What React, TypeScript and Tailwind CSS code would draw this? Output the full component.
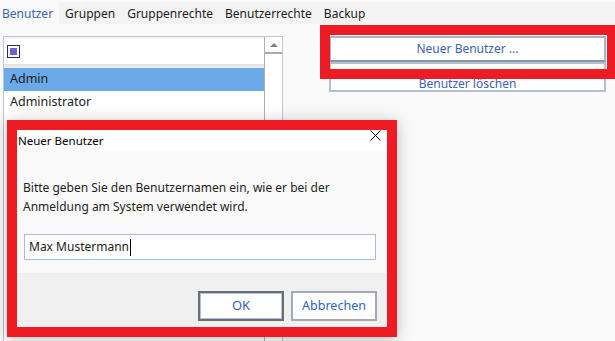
const font = "font-['Noto_Sans','Liberation_Sans',sans-serif]";

const tabs = ['Benutzer', 'Gruppen', 'Gruppenrechte', 'Benutzerrechte', 'Backup'];

const UserList = () => (
  <div className="w-[280px] ml-[3px] h-[320px] border border-[#b9c6d8] bg-white flex">
    <div className="flex-1 flex flex-col">
      <div className="h-[27px] border-t-2 border-[#f4f4f4] flex items-center pl-[3px]">
        <div className="w-[13px] h-[13px] border border-[#2b2b55] flex items-center justify-center">
          <div className="w-[7px] h-[7px] bg-[#6b63d2]" />
        </div>
      </div>
      <div className="h-[4px] bg-gradient-to-b from-[#dedede] to-[#f2f2f2]" />
      <div className="h-[23px] bg-[#6ba9e9] flex items-center pl-[6px] text-[12.5px] text-[#1b1b1b]">Admin</div>
      <div className="h-[23px] flex items-center pl-[6px] text-[12.5px] text-[#1b1b1b]">Administrator</div>
    </div>
    <div className="w-[18px] border-l border-[#b0b0b0] flex flex-col">
      <div className="h-[17px] flex items-center justify-center border-b-2 border-[#ababab]">
        <svg width="8" height="4" viewBox="0 0 8 4">
          <path d="M4 0 L8 4 L0 4 Z" fill="#808080" />
        </svg>
      </div>
    </div>
  </div>
);

const Actions = () => (
  <div className="ml-[46px] w-[277px] flex flex-col">
    <button className="h-[26px] bg-white border-2 border-[#a9b5c7] border-b-[#8e96a3] text-[12px] text-[#3b62b4]">
      Neuer Benutzer ...
    </button>
    <button className="h-[30px] bg-white border-2 border-[#b2c0d3] text-[12px] text-[#3b62b4] pt-[11px]">
      Benutzer löschen
    </button>
  </div>
);

const Dialog = () => (
  <div className="absolute left-[7px] top-[120px] w-[390px] h-[217px] border-[10px] border-[#ed1c24] shadow-[0_2px_14px_rgba(0,0,0,0.25)] flex flex-col">
    <div className="h-[21px] bg-white flex items-start justify-between pl-[1px] pr-[6px]">
      <span className="text-[11.5px] text-black mt-[2px]">Neuer Benutzer</span>
      <svg width="11" height="11" viewBox="0 0 11 11">
        <path d="M0.5 0.5 L10.5 10.5 M10.5 0.5 L0.5 10.5" stroke="#000" strokeWidth="1" />
      </svg>
    </div>
    <div className="h-[122px] bg-[#f9f9f9] px-[6px] pt-[27px]">
      <p className="text-[12px] leading-[19px] text-[#1e1e1e]">
        Bitte geben Sie den Benutzernamen ein, wie er bei der
        <br />
        Anmeldung am System verwendet wird.
      </p>
      <div className="mt-[18px] ml-[1px] w-[352px] h-[26px] bg-white border border-[#a8bde2] flex items-center pl-[4px] text-[12px] text-[#1b1b1b]">
        Max Mustermann
        <span className="w-px h-[17px] bg-black ml-px" />
      </div>
    </div>
    <div className="flex-1 bg-[#f0f0f0] flex justify-end items-start pt-[18px] pr-[10px] gap-[7px]">
      <button className="w-[86px] h-[30px] bg-white border-2 border-[#6d6d6d] text-[13px] text-[#2f62c4] flex items-center justify-center">
        <span className="w-full h-full border border-[#a9c1e3] flex items-center justify-center">OK</span>
      </button>
      <button className="w-[86px] h-[30px] bg-white border-2 border-[#a5a9b3] text-[12.5px] text-[#2f62c4] flex items-center justify-center">
        Abbrechen
      </button>
    </div>
  </div>
);

export default function App() {
  return (
    <div className={`relative w-full h-screen overflow-hidden bg-[#f9f9f9] ${font}`}>
      <nav className="mt-[2px] h-[22px] bg-[#f3f3f3] flex items-center text-[12px] text-[#1b1b1b]">
        {tabs.map((t, i) => (
          <div
            key={t}
            className={
              i === 0
                ? 'h-full flex items-center pt-[2px] pl-[2px] pr-[6px] bg-[#f9f9f9] text-[#3b62b4]'
                : 'h-full flex items-center pt-[2px] px-[6px]'
            }
          >
            {t}
          </div>
        ))}
      </nav>
      <div className="flex pt-[12px]">
        <UserList />
        <Actions />
      </div>

      {/* highlight frame over the "Neuer Benutzer" button */}
      <div className="absolute left-[320px] top-[25px] w-[297px] h-[54px] border-[10px] border-[#ed1c24]" />

      <Dialog />
    </div>
  );
}
